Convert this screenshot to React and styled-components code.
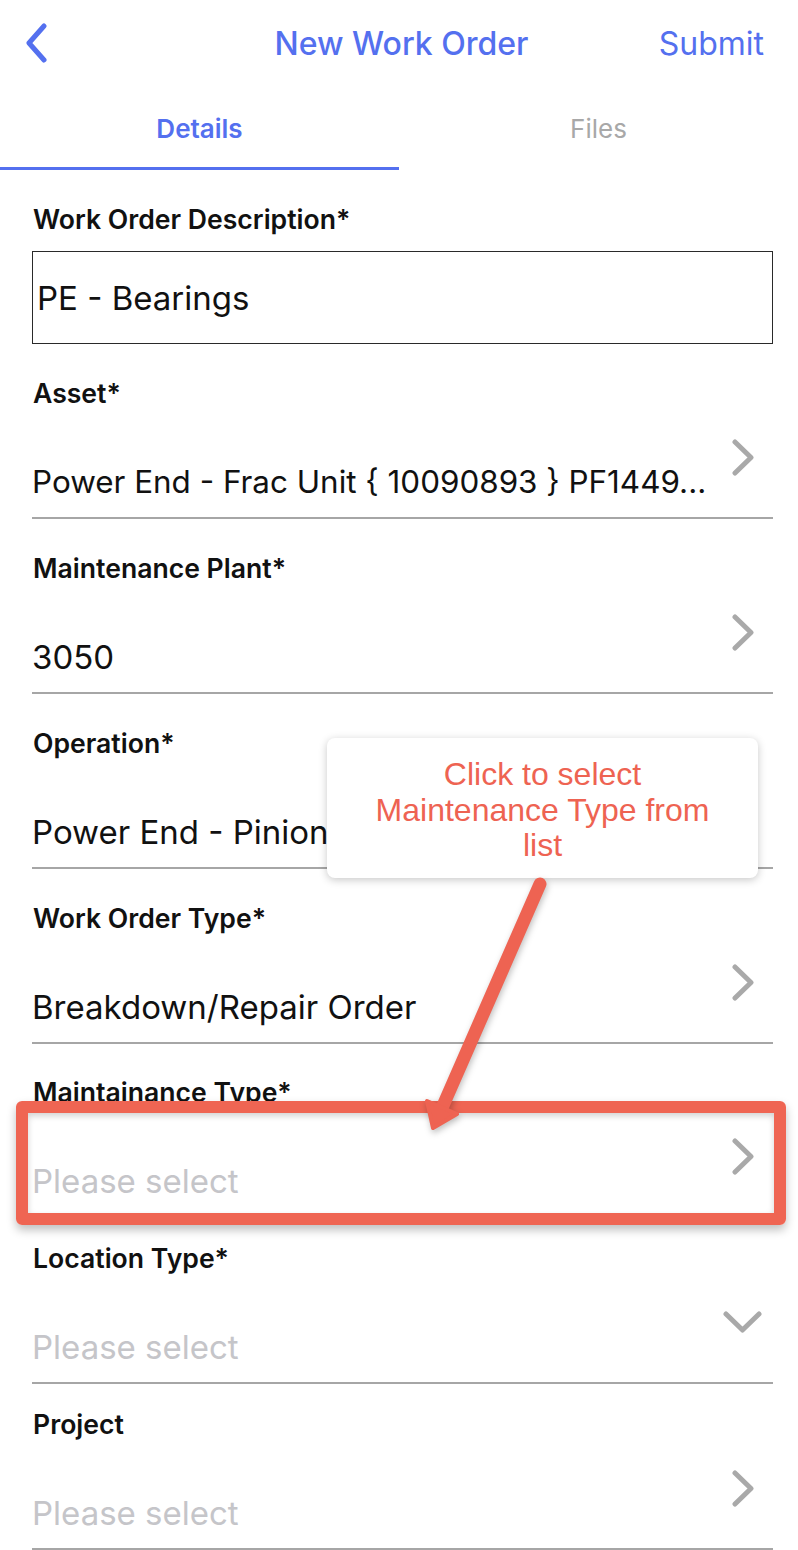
import styled, { createGlobalStyle } from "styled-components";

const BLUE = "#5470ef";
const RED = "#ee6352";

const GlobalStyle = createGlobalStyle`
    * { box-sizing: border-box; }
    body {
        margin: 0;
        background: #ffffff;
        font-family: Inter, "Liberation Sans", Arial, sans-serif;
    }
`

// gap = space below the field before the next label
const fields = [
    { label: "Work Order Description*", value: "PE - Bearings", input: true, gap: 35 },
    { label: "Asset*", value: "Power End - Frac Unit { 10090893 } PF1449...", icon: "right", gap: 35, size: 31.4 },
    { label: "Maintenance Plant*", value: "3050", icon: "right", gap: 35 },
    { label: "Operation*", value: "Power End - Pinion", icon: "right", gap: 35 },
    { label: "Work Order Type*", value: "Breakdown/Repair Order", icon: "right", gap: 34 },
    { label: "Maintainance Type*", icon: "right", gap: 26 },
    { label: "Location Type*", icon: "down", gap: 26 },
    { label: "Project", icon: "right", gap: 0 },
]

const ChevronRight = () => (
    <svg width="22" height="37" viewBox="0 0 22 37">
        <path d="M3 3 L19 18.5 L3 34" fill="none" stroke="#a9a9a9" strokeWidth="5" strokeLinecap="round" strokeLinejoin="round" />
    </svg>
)

const ChevronDown = () => (
    <svg width="39" height="22" viewBox="0 0 39 22">
        <path d="M3 3 L19.5 19 L36 3" fill="none" stroke="#a9a9a9" strokeWidth="5" strokeLinecap="round" strokeLinejoin="round" />
    </svg>
)

const App = () => {
    return (
        <Page>
            <GlobalStyle />
            <Header>
                <Back aria-label="Back">
                    <svg width="23" height="40" viewBox="0 0 23 40">
                        <path d="M19 3 L4 20 L19 37" fill="none" stroke={BLUE} strokeWidth="5" strokeLinecap="round" strokeLinejoin="round" />
                    </svg>
                </Back>
                <Title>New Work Order</Title>
                <Submit>Submit</Submit>
            </Header>

            <Tabs>
                <Tab $active>Details</Tab>
                <Tab>Files</Tab>
            </Tabs>

            <Form>
                {fields.map((f) => (
                    <Field key={f.label} $gap={f.gap}>
                        <Label>{f.label}</Label>
                        {f.input ? (
                            <InputBox>{f.value}</InputBox>
                        ) : (
                            <SelectRow>
                                <Value $placeholder={!f.value} $size={f.size}>
                                    {f.value || "Please select"}
                                </Value>
                                <IconBox $kind={f.icon}>
                                    {f.icon === "down" ? <ChevronDown /> : <ChevronRight />}
                                </IconBox>
                            </SelectRow>
                        )}
                    </Field>
                ))}
            </Form>

            {/* tutorial annotations laid over the form */}
            <Callout>Click to select Maintenance Type from list</Callout>
            <Highlight />
            <Arrow width="798" height="1550" viewBox="0 0 798 1550">
                <line x1="540" y1="884" x2="442" y2="1108" stroke={RED} strokeWidth="13" strokeLinecap="round" />
                <polygon points="433,1128 457,1114 427,1101" fill={RED} stroke={RED} strokeWidth="4" strokeLinejoin="round" />
            </Arrow>
        </Page>
    )
}

const Page = styled.div`
    position: relative;
    width: 798px;
    min-height: 1550px;
    overflow: hidden;
    background: #fff;
`

const Header = styled.div`
    display: grid;
    grid-template-columns: 1fr auto 1fr;
    align-items: center;
    height: 86px;
    padding: 0 34px 0 25px;
`

const Back = styled.div`
    display: flex;
    align-items: center;
`

const Title = styled.div`
    font-size: 32px;
    font-weight: 500;
    color: ${BLUE};
    padding-left: 14px;
`

const Submit = styled.div`
    justify-self: end;
    font-size: 32px;
    font-weight: 400;
    color: ${BLUE};
`

const Tabs = styled.div`
    display: flex;
    height: 84px;
`

const Tab = styled.div`
    flex: 1;
    display: flex;
    align-items: center;
    justify-content: center;
    font-size: 26px;
    font-weight: ${(p) => (p.$active ? 600 : 400)};
    color: ${(p) => (p.$active ? BLUE : "#a8a8a8")};
    border-bottom: 3px solid ${(p) => (p.$active ? BLUE : "transparent")};
    padding-top: 3px;
`

const Form = styled.div`
    display: flex;
    flex-direction: column;
    padding: 35px 25px 0 32px;
`

const Field = styled.div`
    display: flex;
    flex-direction: column;
    margin-bottom: ${(p) => p.$gap}px;
`

const Label = styled.div`
    height: 28px;
    line-height: 28px;
    font-size: 26.6px;
    font-weight: 600;
    color: #111;
    padding-left: 1px;
`

const InputBox = styled.div`
    display: flex;
    align-items: center;
    height: 93px;
    margin-top: 18px;
    padding-left: 4px;
    border: 1.5px solid #2a2a2a;
    font-size: 33px;
    color: #111;
`

const SelectRow = styled.div`
    display: flex;
    align-items: flex-end;
    height: 112px;
    border-bottom: 2px solid #a6a6a6;
`

const Value = styled.div`
    flex: 1;
    min-width: 0;
    line-height: 40px;
    margin-bottom: 15px;
    font-size: ${(p) => p.$size || 33}px;
    white-space: nowrap;
    color: ${(p) => (p.$placeholder ? "#c5c5c9" : "#111")};
`

const IconBox = styled.div`
    display: flex;
    align-items: center;
    height: 40px;
    margin-bottom: 40px;
    margin-right: ${(p) => (p.$kind === "down" ? "11px" : "19px")};
`

const Callout = styled.div`
    position: absolute;
    top: 738px;
    left: 327px;
    width: 431px;
    height: 140px;
    padding: 19px 30px 0;
    background: #fff;
    border-radius: 8px;
    box-shadow: 0 2px 9px rgba(0, 0, 0, 0.22);
    font-family: "Liberation Sans", Arial, sans-serif;
    font-size: 32px;
    line-height: 35.5px;
    color: ${RED};
    text-align: center;
`

const Highlight = styled.div`
    position: absolute;
    top: 1101px;
    left: 16px;
    width: 770px;
    height: 124px;
    border: 12px solid #ef6553;
    border-radius: 6px;
    box-shadow: 0 5px 10px rgba(0, 0, 0, 0.25), inset 0 3px 6px rgba(0, 0, 0, 0.18);
    pointer-events: none;
`

const Arrow = styled.svg`
    position: absolute;
    top: 0;
    left: 0;
    pointer-events: none;
    filter: drop-shadow(1px 3px 3px rgba(0, 0, 0, 0.25));
`

export default App
